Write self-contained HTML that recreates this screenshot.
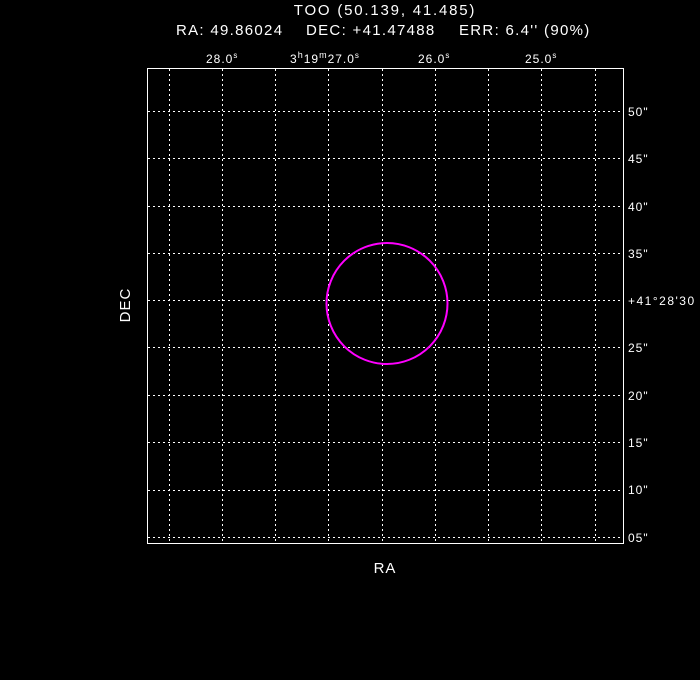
<html><body style="margin:0;background:#000">
<svg width="700" height="680" xmlns="http://www.w3.org/2000/svg" style="display:block;background:#000">
<g fill="#fff" font-family="Liberation Sans, DejaVu Sans, sans-serif" font-size="15">
<text x="385" y="15" text-anchor="middle" letter-spacing="1.8">TOO (50.139, 41.485)</text>
<text x="176" y="35" letter-spacing="1.3">RA: 49.86024</text>
<text x="306" y="35" letter-spacing="1.3">DEC: +41.47488</text>
<text x="459" y="35" letter-spacing="1.3">ERR: 6.4'' (90%)</text>
<g font-size="12" letter-spacing="1">
<text x="206" y="63">28.0<tspan font-size="8" dy="-5">s</tspan></text>
<text x="290" y="63">3<tspan font-size="9" dy="-5">h</tspan><tspan dy="5">19</tspan><tspan font-size="9" dy="-5">m</tspan><tspan dy="5">27.0</tspan><tspan font-size="8" dy="-5">s</tspan></text>
<text x="418" y="63">26.0<tspan font-size="8" dy="-5">s</tspan></text>
<text x="525" y="63">25.0<tspan font-size="8" dy="-5">s</tspan></text>
<text x="628" y="116">50"</text>
<text x="628" y="163">45"</text>
<text x="628" y="211">40"</text>
<text x="628" y="258">35"</text>
<text x="628" y="305" letter-spacing="1.5">+41°28'30</text>
<text x="628" y="352">25"</text>
<text x="628" y="400">20"</text>
<text x="628" y="447">15"</text>
<text x="628" y="494">10"</text>
<text x="628" y="542">05"</text>
</g>
<text x="385" y="573" text-anchor="middle" letter-spacing="1">RA</text>
<text transform="translate(130,305) rotate(-90)" text-anchor="middle" letter-spacing="1">DEC</text>
</g>
<g stroke="#fff" stroke-width="1" stroke-dasharray="2,3" fill="none">
<path d="M169.5 69V543M222.5 69V543M275.5 69V543M328.5 69V543M382.5 69V543M435.5 69V543M488.5 69V543M541.5 69V543M595.5 69V543"/>
<path d="M148 111.5H623M148 158.5H623M148 206.5H623M148 253.5H623M148 300.5H623M148 347.5H623M148 395.5H623M148 442.5H623M148 490.5H623M148 537.5H623"/>
</g>
<rect x="147.5" y="68.5" width="476" height="475" fill="none" stroke="#fff"/>
<circle cx="387" cy="303.5" r="60.5" fill="none" stroke="#f0f" stroke-width="2"/>
</svg>
</body></html>
